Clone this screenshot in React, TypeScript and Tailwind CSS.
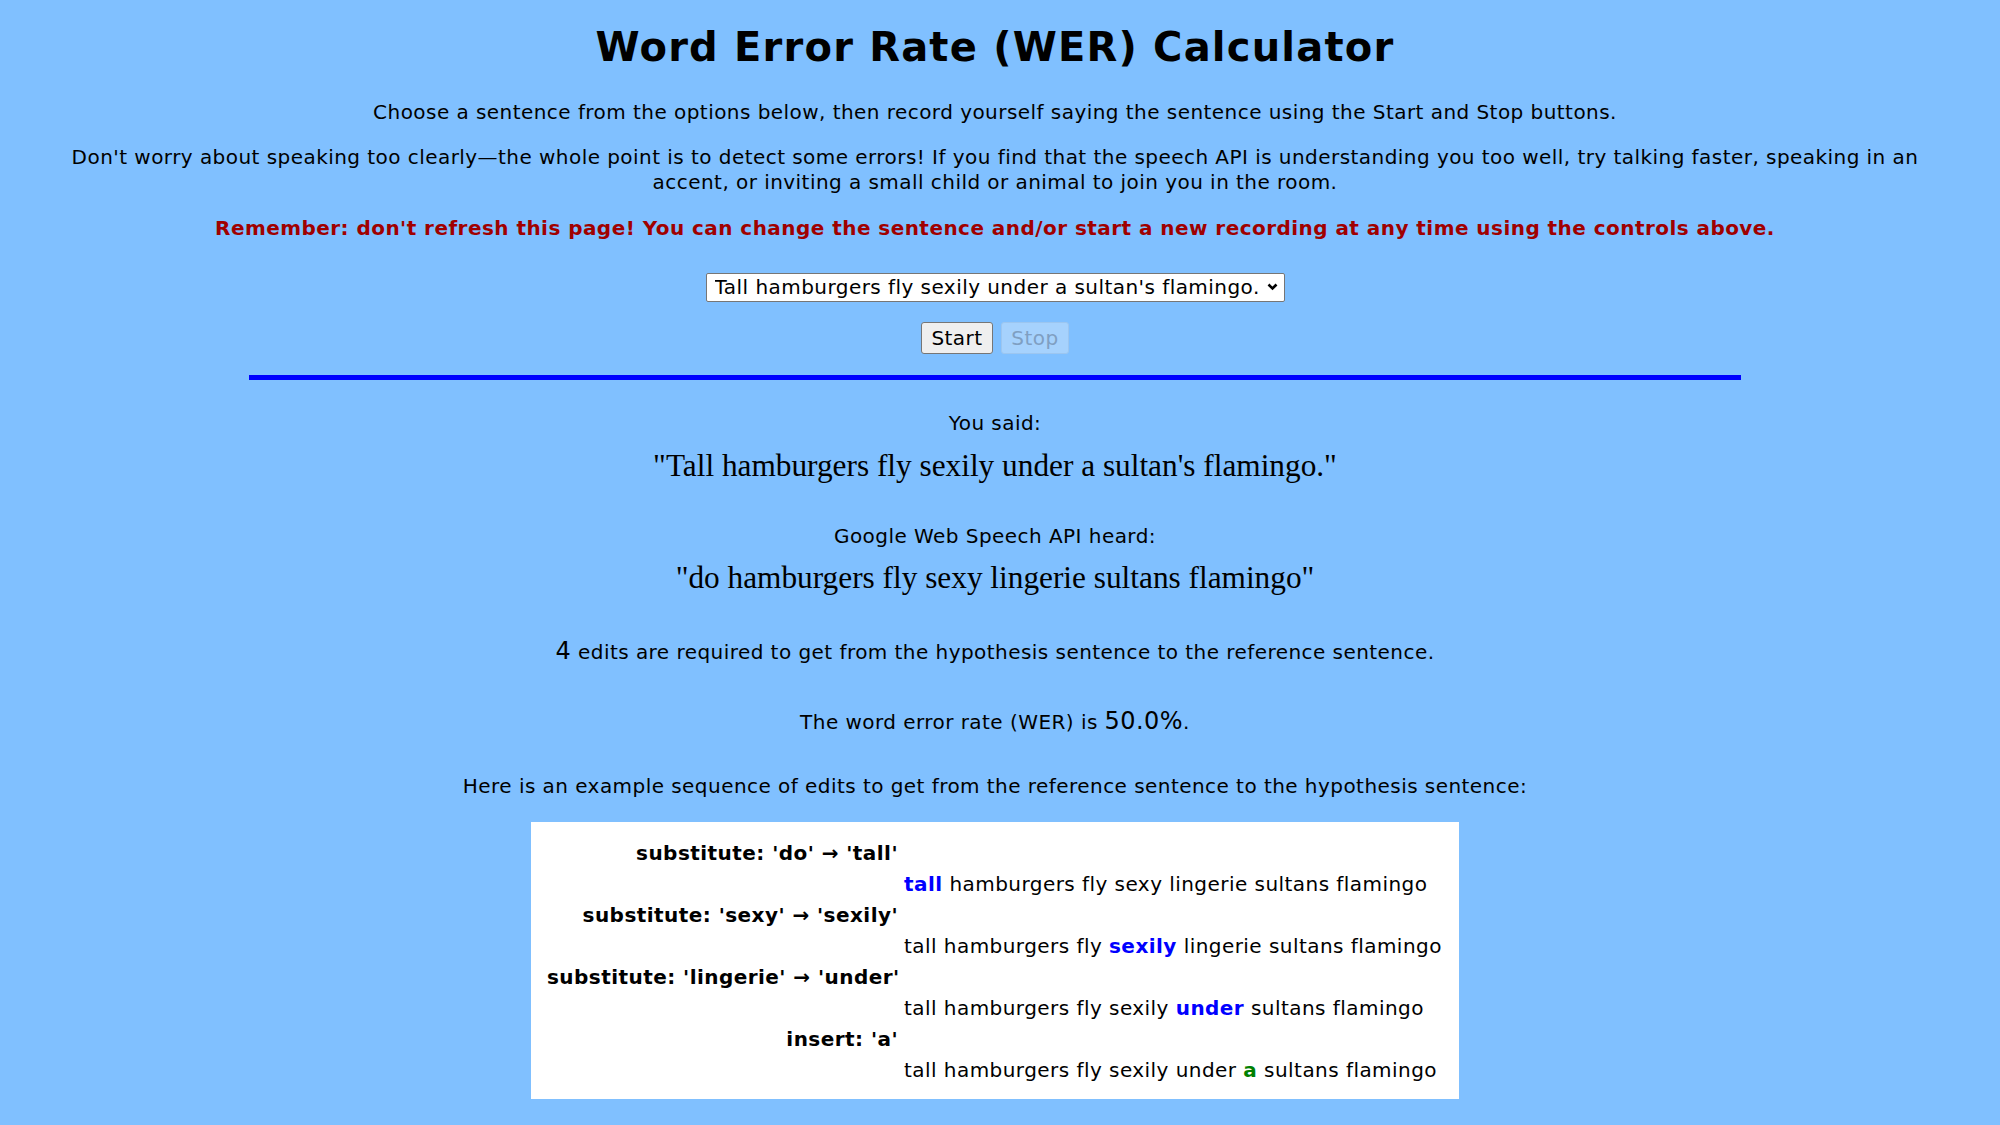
import React from "react";

const sans = "font-['DejaVu_Sans',Verdana,sans-serif]";

function EditRow({ label, children }: { label: string; children: React.ReactNode }) {
  return (
    <>
      <div className="text-right font-bold whitespace-nowrap">{label}</div>
      <div />
      <div />
      <div className="text-left whitespace-nowrap">{children}</div>
    </>
  );
}

export default function App() {
  return (
    <div className={`min-h-screen bg-[#80c0ff] text-black ${sans} text-[20px] tracking-[0.45px]`}>
      <div className="w-[1990px] flex flex-col items-center text-center">
        <h1 className="mt-[23px] text-[40px] leading-[48px] font-bold tracking-[1.2px]">Word Error Rate (WER) Calculator</h1>
        <p className="mt-[29px] leading-[25px]">
          Choose a sentence from the options below, then record yourself saying the sentence using the Start and Stop buttons.
        </p>
        <p className="mt-[20px] leading-[25px] px-[58px]">
          Don't worry about speaking too clearly—the whole point is to detect some errors! If you find that the speech API is understanding you too well, try talking faster, speaking in an accent, or inviting a small child or animal to join you in the room.
        </p>
        <p className="mt-[21px] leading-[25px] font-bold text-[#a00000]">
          Remember: don't refresh this page! You can change the sentence and/or start a new recording at any time using the controls above.
        </p>
        <div className="mt-[31px] relative w-[579px] h-[29px]">
          <select
            defaultValue="a"
            className={`appearance-none w-full h-full bg-white border border-[#767676] rounded-[2px] pl-[8px] pr-[24px] text-[20px] leading-[27px] tracking-[0.45px] text-black ${sans}`}
          >
            <option value="a">Tall hamburgers fly sexily under a sultan's flamingo.</option>
          </select>
          <svg className="absolute right-[7px] top-[11px] pointer-events-none" width="11" height="8" viewBox="0 0 11 8">
            <path d="M1.5 1.5 L5.5 5.5 L9.5 1.5" stroke="#000" strokeWidth="2.6" fill="none" />
          </svg>
        </div>
        <div className="mt-[21px] flex gap-[8px]">
          <button className="h-[32px] w-[72px] bg-[#efefef] border border-[#767676] rounded-[3px] text-[20px] text-black leading-none tracking-[0.45px]">
            Start
          </button>
          <button
            disabled
            className="h-[32px] w-[68px] bg-[#a6d2fd] border border-[#9cc6f0] rounded-[3px] text-[20px] text-[#7f9fc2] leading-none tracking-[0.45px]"
          >
            Stop
          </button>
        </div>
        <div className="mt-[21px] w-3/4 h-[5px] bg-[#0000ff]" />
        <p className="mt-[31px] leading-[25px]">You said:</p>
        <p className="mt-[10px] leading-[40px] text-[31.3px] tracking-normal font-['Liberation_Serif',serif]">
          "Tall hamburgers fly sexily under a sultan's flamingo."
        </p>
        <p className="mt-[38px] leading-[25px]">Google Web Speech API heard:</p>
        <p className="mt-[9px] leading-[40px] text-[31.3px] tracking-normal font-['Liberation_Serif',serif]">
          "do hamburgers fly sexy lingerie sultans flamingo"
        </p>
        <p className="mt-[39px] leading-[30px]">
          <span className="text-[24px] leading-none">4</span> edits are required to get from the hypothesis sentence to the reference sentence.
        </p>
        <p className="mt-[40px] leading-[30px]">
          The word error rate (WER) is <span className="text-[24px] leading-none">50.0%</span>.
        </p>
        <p className="mt-[37px] leading-[25px]">
          Here is an example sequence of edits to get from the reference sentence to the hypothesis sentence:
        </p>
        <div className="mt-[23px] mb-[26px] bg-white w-[928px] pt-[16px] pb-[13px] px-[16px]">
          <div className="grid grid-cols-[351px_540px] gap-x-[6px] leading-[31px]">
            <EditRow label="substitute: 'do' → 'tall'">
              <b className="text-[#0000ff]">tall</b> hamburgers fly sexy lingerie sultans flamingo
            </EditRow>
            <EditRow label="substitute: 'sexy' → 'sexily'">
              tall hamburgers fly <b className="text-[#0000ff]">sexily</b> lingerie sultans flamingo
            </EditRow>
            <EditRow label="substitute: 'lingerie' → 'under'">
              tall hamburgers fly sexily <b className="text-[#0000ff]">under</b> sultans flamingo
            </EditRow>
            <EditRow label="insert: 'a'">
              tall hamburgers fly sexily under <b className="text-[#008000]">a</b> sultans flamingo
            </EditRow>
          </div>
        </div>
      </div>
    </div>
  );
}
